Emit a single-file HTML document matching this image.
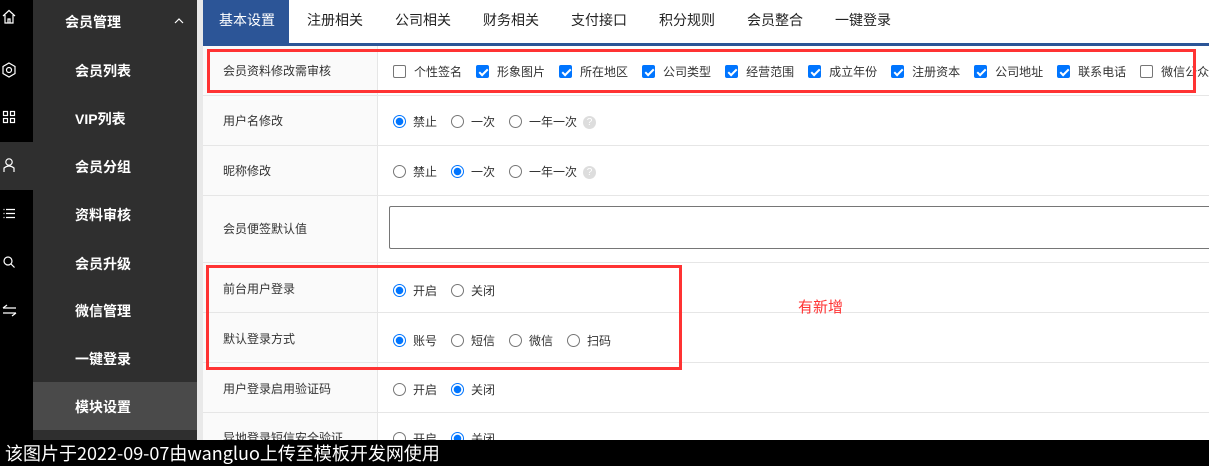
<!DOCTYPE html>
<html><head><meta charset="utf-8"><style>
*{margin:0;padding:0;box-sizing:border-box}
body{width:1209px;height:466px;overflow:hidden;background:#fff;font-family:"Liberation Sans","Noto Sans CJK SC",sans-serif;position:relative;font-size:13px;color:#333}
.a{position:absolute}
.ib{left:0;top:0;width:33px;height:466px;background:#000}
.sb{left:33px;top:0;width:164px;height:466px;background:#2f2f2f}
.gap{left:197px;top:0;width:6px;height:466px;background:#e9e9e9}
.nav{color:#fff;font-size:14px;font-weight:bold;left:75px}
.tab{top:0;height:43px;line-height:41px;font-size:14px;color:#222}
.row{left:203px;width:1006px;border-bottom:1px solid #e6e6e6}
.lab{left:203px;width:175px;background:#fafafa;border-right:1px solid #e6e6e6}
.lt{left:223px;font-size:12px;color:#333}
.cb{width:13px;height:13px;border:1px solid #767676;border-radius:2px;background:#fff;display:inline-block;vertical-align:-2px;margin-right:8px}
.cb.on{background:#0075ff;border-color:#0075ff;position:relative}
.cb.on:after{content:"";position:absolute;left:3.5px;top:0.5px;width:3px;height:7px;border:solid #fff;border-width:0 2px 2px 0;transform:rotate(45deg)}
.rd{width:13px;height:13px;border:1px solid #767676;border-radius:50%;display:inline-block;vertical-align:-2px;margin-right:7px;background:#fff}
.rd.on{border:1.5px solid #0075ff;background:radial-gradient(circle,#0075ff 3.5px,#fff 4px)}
.opts{left:393px;font-size:12px;color:#333;white-space:nowrap}
.opts span.o{margin-right:14px}
.q{display:inline-block;width:13px;height:13px;border-radius:50%;background:#ddd;color:#fff;font-size:10px;text-align:center;line-height:13px;vertical-align:1px;margin-left:-8px}
.red{border:3px solid #f33}
</style></head><body>
<div class="a ib"></div>
<div class="a" style="left:0;top:142px;width:33px;height:48px;background:#2f2f2f"></div>
<div class="a sb"></div>
<div class="a" style="left:33px;top:382px;width:164px;height:48px;background:#4a4a4a"></div>
<div class="a gap"></div>
<svg class="a" style="left:0;top:0" width="33" height="330" fill="none" stroke="#fff" stroke-width="1.2">
<path d="M3 16 L9 10.5 L15 16 M5 15 V23 H13 V15 M8 23 V19 H10 V23"/>
<path d="M9 63 L15 66.5 V73.5 L9 77 L3 73.5 V66.5 Z"/><circle cx="9" cy="70" r="2.5"/>
<rect x="3.5" y="111.5" width="4" height="4"/><rect x="10.5" y="111.5" width="4" height="4"/><rect x="3.5" y="118.5" width="4" height="4"/><rect x="10.5" y="118.5" width="4" height="4"/>
<circle cx="9" cy="162" r="3.2"/><path d="M4 172 V168 Q9 164 14 168 V172"/>
<path d="M3.5 209.5 H4.5 M6 209.5 H15 M3.5 213.5 H4.5 M6 213.5 H15 M3.5 217.5 H4.5 M6 217.5 H15"/>
<circle cx="8" cy="261" r="4"/><path d="M11 264 L14.5 267.5"/>
<path d="M3 308 H16 M3 308 L7 305 M3 313 H16 M16 313 L12 316"/>
</svg>
<svg class="a" style="left:174px;top:18px" width="10" height="6" fill="none" stroke="#fff" stroke-width="1.2"><path d="M1 5 L5 1 L9 5"/></svg>
<div class="a nav" style="left:65px;top:12px">会员管理</div>
<div class="a nav" style="top:61px">会员列表</div>
<div class="a nav" style="top:109px">VIP列表</div>
<div class="a nav" style="top:157px">会员分组</div>
<div class="a nav" style="top:205px">资料审核</div>
<div class="a nav" style="top:254px">会员升级</div>
<div class="a nav" style="top:301px">微信管理</div>
<div class="a nav" style="top:349px">一键登录</div>
<div class="a nav" style="top:397px">模块设置</div>

<div class="a" style="left:203px;top:0;width:86px;height:43px;background:#2c5597"></div>
<div class="a" style="left:203px;top:43px;width:1006px;height:3px;background:#2c5597"></div>
<div class="a tab" style="left:219px;color:#fff">基本设置</div>
<div class="a tab" style="left:307px">注册相关</div>
<div class="a tab" style="left:395px">公司相关</div>
<div class="a tab" style="left:483px">财务相关</div>
<div class="a tab" style="left:571px">支付接口</div>
<div class="a tab" style="left:659px">积分规则</div>
<div class="a tab" style="left:747px">会员整合</div>
<div class="a tab" style="left:835px">一键登录</div>

<div class="a lab" style="top:46px;height:394px"></div>
<div class="a row" style="top:46px;height:50px"></div>
<div class="a row" style="top:96px;height:50px"></div>
<div class="a row" style="top:146px;height:50px"></div>
<div class="a row" style="top:196px;height:67px"></div>
<div class="a row" style="top:263px;height:50px"></div>
<div class="a row" style="top:313px;height:50px"></div>
<div class="a row" style="top:363px;height:50px"></div>

<div class="a lt" style="top:62px">会员资料修改需审核</div>
<div class="a opts" style="top:63px"><span class="cb"></span><span class="o">个性签名</span><span class="cb on"></span><span class="o">形象图片</span><span class="cb on"></span><span class="o">所在地区</span><span class="cb on"></span><span class="o">公司类型</span><span class="cb on"></span><span class="o">经营范围</span><span class="cb on"></span><span class="o">成立年份</span><span class="cb on"></span><span class="o">注册资本</span><span class="cb on"></span><span class="o">公司地址</span><span class="cb on"></span><span class="o">联系电话</span><span class="cb"></span><span class="o">微信公众号</span></div>

<div class="a lt" style="top:112px">用户名修改</div>
<div class="a opts" style="top:113px"><span class="rd on"></span><span class="o">禁止</span><span class="rd"></span><span class="o">一次</span><span class="rd"></span><span class="o">一年一次</span><span class="q">?</span></div>
<div class="a lt" style="top:162px">昵称修改</div>
<div class="a opts" style="top:163px"><span class="rd"></span><span class="o">禁止</span><span class="rd on"></span><span class="o">一次</span><span class="rd"></span><span class="o">一年一次</span><span class="q">?</span></div>
<div class="a lt" style="top:220px">会员便签默认值</div>
<div class="a" style="left:389px;top:206px;width:830px;height:43px;border:1px solid #767676;border-radius:2px"></div>
<div class="a lt" style="top:280px">前台用户登录</div>
<div class="a opts" style="top:282px"><span class="rd on"></span><span class="o">开启</span><span class="rd"></span><span class="o">关闭</span></div>
<div class="a lt" style="top:330px">默认登录方式</div>
<div class="a opts" style="top:332px"><span class="rd on"></span><span class="o">账号</span><span class="rd"></span><span class="o">短信</span><span class="rd"></span><span class="o">微信</span><span class="rd"></span><span class="o">扫码</span></div>
<div class="a lt" style="top:380px">用户登录启用验证码</div>
<div class="a opts" style="top:381px"><span class="rd"></span><span class="o">开启</span><span class="rd on"></span><span class="o">关闭</span></div>
<div class="a lt" style="top:429px">异地登录短信安全验证</div>
<div class="a opts" style="top:430px"><span class="rd"></span><span class="o">开启</span><span class="rd on"></span><span class="o">关闭</span></div>

<div class="a red" style="left:207px;top:49px;width:989px;height:44px"></div>
<div class="a red" style="left:206px;top:265px;width:476px;height:105px"></div>
<div class="a" style="left:798px;top:296px;color:#f33;font-size:15px">有新增</div>

<div class="a" style="left:0;top:440px;width:1209px;height:26px;background:#000;color:#fff;font-size:18px;line-height:26px;padding-left:5px;font-family:'Noto Sans CJK SC','DejaVu Sans',sans-serif">该图片于2022-09-07由wangluo上传至模板开发网使用</div>
</body></html>
